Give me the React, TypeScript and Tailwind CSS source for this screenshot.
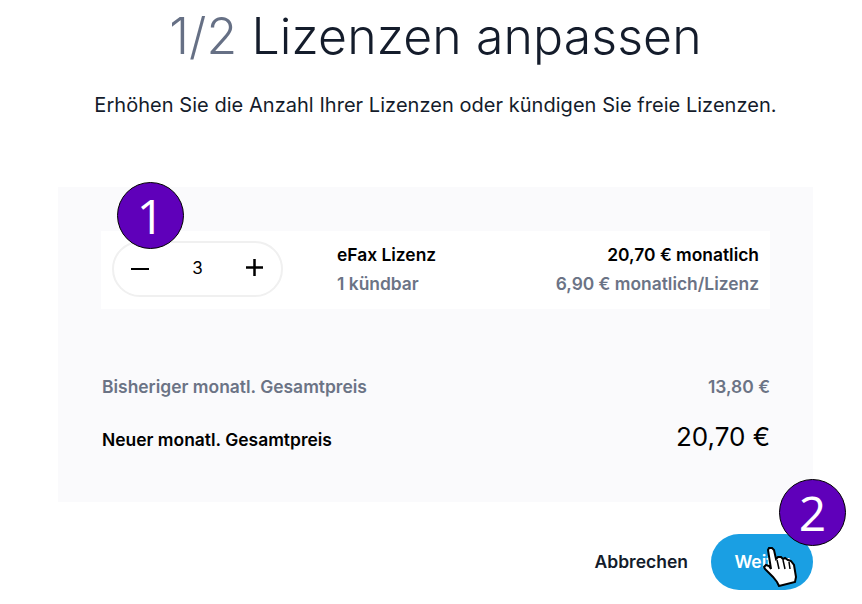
const font = { fontFamily: '"Inter", "Liberation Sans", sans-serif' };

function Badge({ n, className }: { n: string; className: string }) {
  return (
    <div
      className={`absolute flex h-[67px] w-[67px] items-center justify-center rounded-full border border-black bg-[#5f00ba] text-[48px] leading-none text-white ${className}`}
      style={{ fontFamily: '"Open Sans", sans-serif' }}
    >
      {n}
    </div>
  );
}

function HandCursor() {
  return (
    <svg className="absolute left-[52px] top-[13px]" width="34" height="40" viewBox="0 0 34 40">
      <path
        d="M5 3 L6 1 L9 1 L11 3 L13 12 L15 10 L18 10 L20 12 L22 11 L25 13 L28 14 L31 18 L33 30 L32 35 L16 39 L14 35 L10 30 L2 22 L1 20 L3 18 L6 19 L8 22 Z"
        fill="#fff"
        stroke="#000"
        strokeWidth="2"
      />
      <path d="M14 13 L16 22 M20 13 L22 22 M26 15 L27 22" stroke="#000" strokeWidth="1.5" />
    </svg>
  );
}

export default function App() {
  return (
    <div className="relative h-[604px] w-[862px] overflow-hidden bg-white" style={font}>
      <div className="ml-[58px] w-[755px]">
        {/* TITLE */}
        <h1 className="pt-[5px] text-center text-[50px] leading-[62px] font-light tracking-[0.1px] text-[#141c2b]">
          <span className="text-[#667085]">1/2</span> Lizenzen anpassen
        </h1>
        <p className="mt-[25px] text-center text-[20px] leading-[26px] tracking-[0.04px] text-[#141c2b]">
          Erhöhen Sie die Anzahl Ihrer Lizenzen oder kündigen Sie freie Lizenzen.
        </p>

        {/* PANEL */}
        <div className="relative mt-[69px] h-[315px] bg-[#fafafc] px-[43px] pt-[44px]">
          <div className="flex h-[78px] items-center bg-white pl-[11px] pr-[11px]">
            <div className="-mt-[2px] flex h-[56px] w-[171px] items-center justify-between rounded-full border-2 border-[#f0f0f0] pl-[17px] pr-[18px]">
              <span className="block h-[2.5px] w-[18px] bg-black"></span>
              <span className="text-[17px] text-black">3</span>
              <svg className="mb-[3px]" width="17" height="17" viewBox="0 0 17 17">
                <path d="M8.5 0 V17 M0 8.5 H17" stroke="#000" strokeWidth="2.5" />
              </svg>
            </div>
            <div className="mb-[2px] ml-[54px] text-[17.4px] leading-[29px] font-semibold">
              <div className="text-black">eFax Lizenz</div>
              <div className="text-[#6b7385]">1 kündbar</div>
            </div>
            <div className="mb-[2px] ml-auto text-right text-[17.4px] leading-[29px] font-semibold">
              <div className="text-black">20,70 € monatlich</div>
              <div className="text-[#6b7385]">6,90 € monatlich/Lizenz</div>
            </div>
          </div>

          <div className="mt-[65px] flex items-center justify-between text-[17.45px] font-semibold text-[#6b7385]">
            <span className="ml-[1px]">Bisheriger monatl. Gesamtpreis</span>
            <span>13,80 €</span>
          </div>
          <div className="mt-[17px] flex items-center justify-between font-semibold text-black">
            <span className="mt-[6px] ml-[1px] text-[17.45px]">Neuer monatl. Gesamtpreis</span>
            <span className="text-[26px] font-normal">20,70 €</span>
          </div>
        </div>

        {/* FOOTER */}
        <div className="mt-[32px] flex items-center justify-end">
          <span className="text-[17.5px] font-semibold text-[#141c2b]">Abbrechen</span>
          <div className="relative ml-[23px] flex h-[56px] w-[102px] items-center justify-center rounded-full bg-[#1a9fe3] text-[17.5px] font-semibold text-white">
            Weiter
            <HandCursor />
          </div>
        </div>
      </div>

      <Badge n="1" className="left-[117px] top-[182px]" />
      <Badge n="2" className="left-[779px] top-[479px]" />
    </div>
  );
}
